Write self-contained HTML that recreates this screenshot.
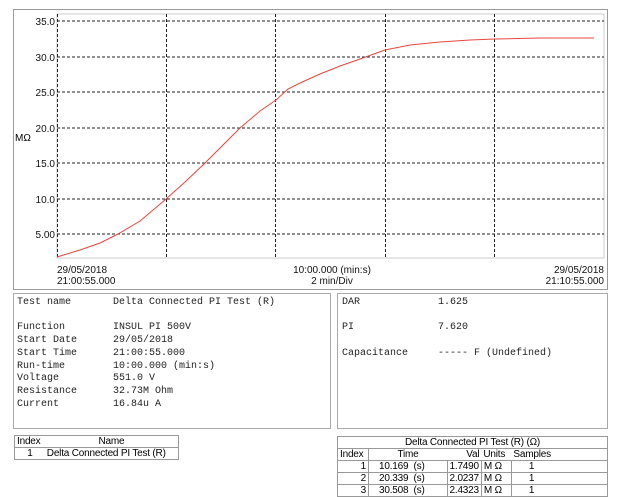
<!DOCTYPE html>
<html><head><meta charset="utf-8"><style>
body{margin:0;width:620px;height:495px;background:#fff;position:relative;overflow:hidden;font-family:"Liberation Sans",Arial,sans-serif}
.box{position:absolute;border:1px solid #aaa;box-sizing:border-box}
.mono{font-family:"Liberation Mono","Courier New",monospace;font-size:10px;color:#222;position:absolute;white-space:pre}
.t{position:absolute;font-size:10px;color:#000;white-space:nowrap}
table{border-collapse:collapse;font-size:10px;position:absolute;letter-spacing:-0.2px}
td{padding:0 2px;height:11px;line-height:11px;white-space:nowrap}
</style></head><body>
<div class="box" style="left:13px;top:9px;width:595px;height:281px;border:1px solid #999"></div>
<svg style="position:absolute;left:0;top:0" width="620" height="295">
<rect x="57" y="14" width="547" height="244" fill="#fff" stroke="#ccc"/>
<g stroke="#222" stroke-width="1" stroke-dasharray="3,2" fill="none">
<line x1="57" y1="21" x2="604" y2="21"/><line x1="57" y1="57" x2="604" y2="57"/>
<line x1="57" y1="92" x2="604" y2="92"/><line x1="57" y1="128" x2="604" y2="128"/>
<line x1="57" y1="163" x2="604" y2="163"/><line x1="57" y1="199" x2="604" y2="199"/>
<line x1="57" y1="234" x2="604" y2="234"/>
<line x1="57.5" y1="14" x2="57.5" y2="258"/><line x1="166.5" y1="14" x2="166.5" y2="258"/>
<line x1="275.5" y1="14" x2="275.5" y2="258"/><line x1="385.5" y1="14" x2="385.5" y2="258"/>
<line x1="494.5" y1="14" x2="494.5" y2="258"/>
</g>
<polyline fill="none" stroke="#e8473f" stroke-width="1" points="57,257 80,250 100,243 118,234 140,221 166,199 185,182 205,163 222,146 240,128 260,111 276,100 288,89 300,83 320,74 340,66 360,59 385,50 410,45 440,42 470,40 495,39 540,38 594,38"/>
<g font-size="10" font-family="Liberation Sans,Arial,sans-serif" fill="#111" text-anchor="end">
<text x="55" y="25">35.0</text><text x="55" y="61">30.0</text><text x="55" y="96">25.0</text>
<text x="55" y="132">20.0</text><text x="55" y="167">15.0</text><text x="55" y="203">10.0</text>
<text x="55" y="238">5.00</text>
</g>
<text x="15" y="141" font-size="10" font-family="Liberation Sans,Arial,sans-serif">MΩ</text>
<g font-size="10" font-family="Liberation Sans,Arial,sans-serif" fill="#111">
<text x="57" y="273">29/05/2018</text><text x="57" y="284">21:00:55.000</text>
<text x="332" y="273" text-anchor="middle">10:00.000 (min:s)</text><text x="332" y="284" text-anchor="middle">2 min/Div</text>
<text x="604" y="273" text-anchor="end">29/05/2018</text><text x="604" y="284" text-anchor="end">21:10:55.000</text>
</g>
</svg>
<div class="box" style="left:13px;top:293px;width:318px;height:136px"></div>
<div class="box" style="left:337px;top:293px;width:271px;height:136px"></div>
<div class="mono" style="left:17px;top:297px;line-height:12.7px">Test name       Delta Connected PI Test (R)

Function        INSUL PI 500V
Start Date      29/05/2018
Start Time      21:00:55.000
Run-time        10:00.000 (min:s)
Voltage         551.0 V
Resistance      32.73M Ohm
Current         16.84u A</div>
<div class="mono" style="left:342px;top:297px;line-height:12.7px">DAR             1.625

PI              7.620

Capacitance     ----- F (Undefined)</div>
<table style="left:14px;top:435px;width:165px;border:1px solid #999">
<tr><td style="border-bottom:1px solid #999">Index</td><td style="border-bottom:1px solid #999;text-align:center">Name</td></tr>
<tr><td style="text-align:center">1</td><td>Delta Connected PI Test (R)</td></tr>
</table>
<table style="left:337px;top:436px;width:271px;border:1px solid #999">
<tr><td colspan="5" style="text-align:center;border-bottom:1px solid #999">Delta Connected PI Test (R) (Ω)</td></tr>
<tr><td style="width:26px;border-right:1px solid #999;border-bottom:1px solid #999">Index</td><td style="text-align:center;width:74px;border-bottom:1px solid #999">Time</td><td style="width:30px;text-align:right;border-bottom:1px solid #999">Val</td><td style="width:26px;border-bottom:1px solid #999">Units</td><td style="border-bottom:1px solid #999">Samples</td></tr>
<tr><td style="text-align:right;border-right:1px solid #999;border-bottom:1px solid #999">1</td><td style="border-bottom:1px solid #999;border-right:1px solid #999;padding-left:10px">10.169 &nbsp;(s)</td><td style="border-bottom:1px solid #999;border-right:1px solid #999">1.7490</td><td style="border-bottom:1px solid #999;border-right:1px solid #999">M Ω</td><td style="border-bottom:1px solid #999;padding-left:17px">1</td></tr>
<tr><td style="text-align:right;border-right:1px solid #999;border-bottom:1px solid #999">2</td><td style="border-bottom:1px solid #999;border-right:1px solid #999;padding-left:10px">20.339 &nbsp;(s)</td><td style="border-bottom:1px solid #999;border-right:1px solid #999">2.0237</td><td style="border-bottom:1px solid #999;border-right:1px solid #999">M Ω</td><td style="border-bottom:1px solid #999;padding-left:17px">1</td></tr>
<tr><td style="text-align:right;border-right:1px solid #999">3</td><td style="border-right:1px solid #999;padding-left:10px">30.508 &nbsp;(s)</td><td style="border-right:1px solid #999">2.4323</td><td style="border-right:1px solid #999">M Ω</td><td style="padding-left:17px">1</td></tr>
</table>
</body></html>
